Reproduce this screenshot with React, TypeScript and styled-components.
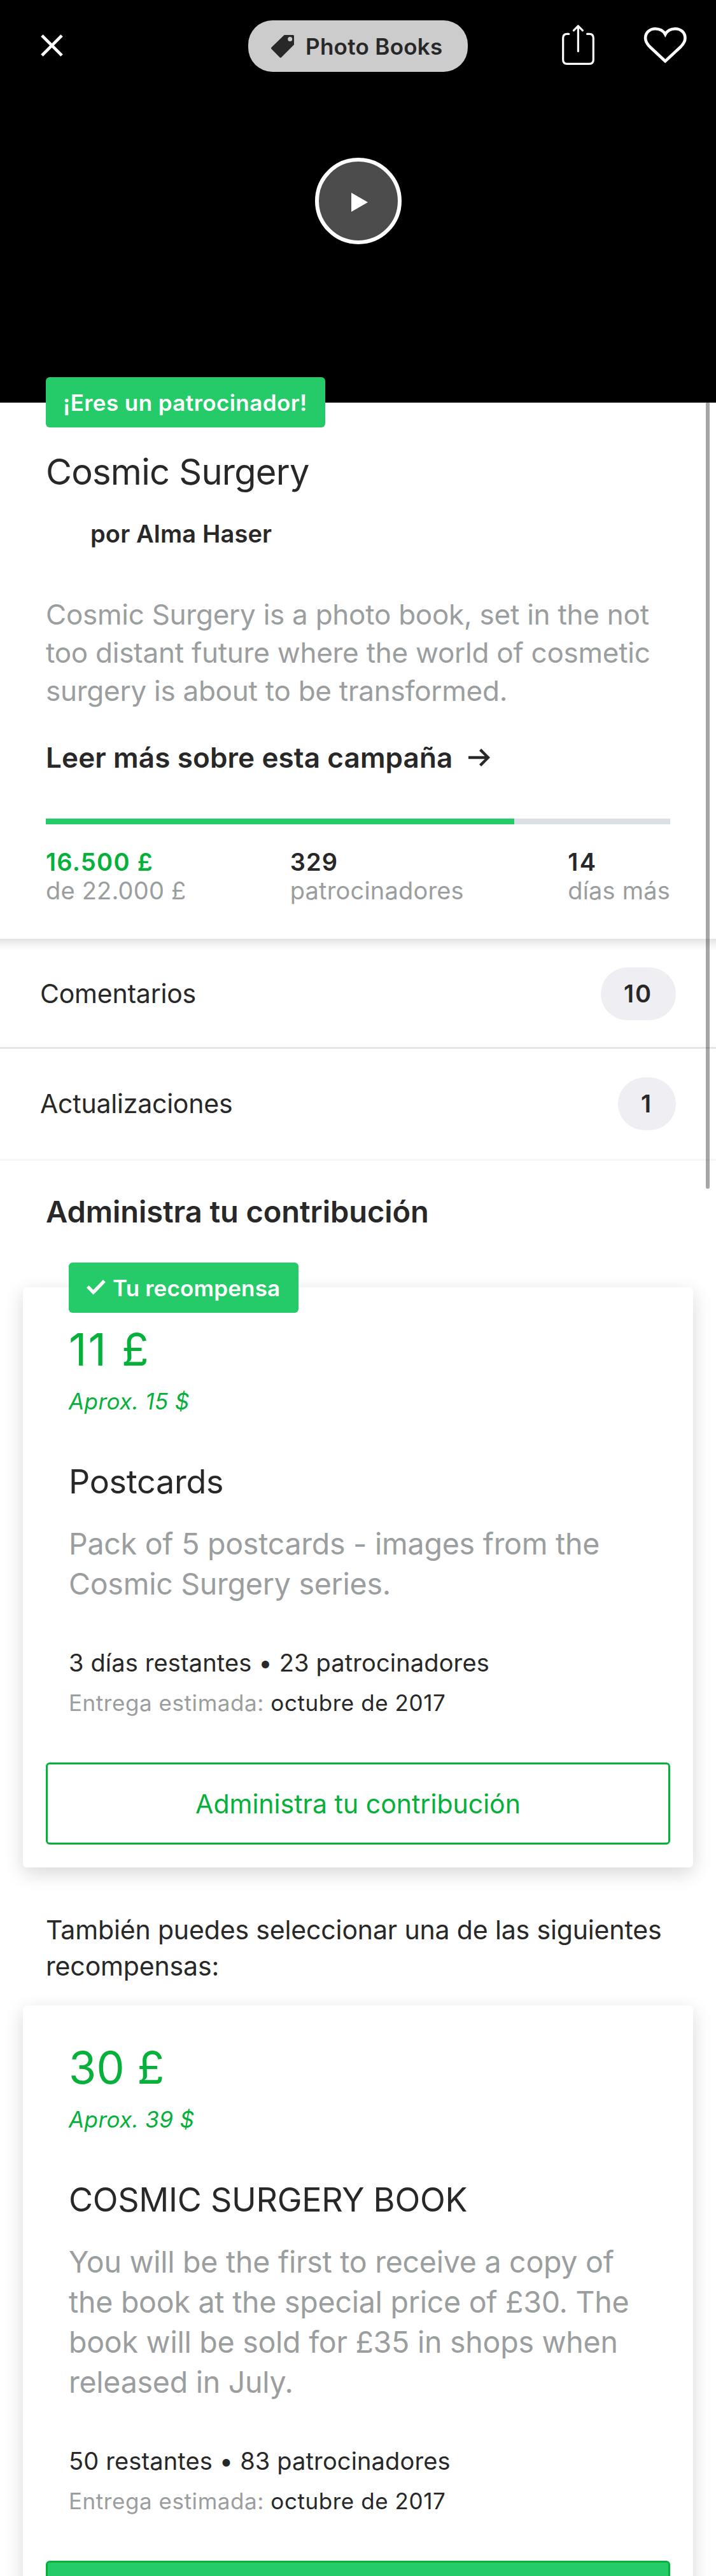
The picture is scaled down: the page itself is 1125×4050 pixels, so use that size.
import React from 'react';
import styled, { createGlobalStyle } from 'styled-components';

const ink = '#282828';
const muted = '#9b9e9e';
const green = '#25cb68';
const deepGreen = '#05b13a';

const GlobalStyle = createGlobalStyle`
  * { box-sizing: border-box; }
  body {
    margin: 0;
    background: #fff;
    color: ${ink};
    font-family: Inter, "Liberation Sans", sans-serif;
    -webkit-font-smoothing: antialiased;
  }
  h1, h2, h3, p { margin: 0; font-weight: 400; }
  button { font-family: inherit; padding: 0; border: 0; background: none; }
  svg { display: block; flex: none; }
`;

const Page = styled.main`
  position: relative;
  width: 1125px;
  height: 4050px;
  overflow: hidden;
  background: #fff;
`;

const ScrollIndicator = styled.div`
  position: absolute;
  top: 600px;
  right: 10px;
  width: 6px;
  height: 1269px;
  border-radius: 3px;
  background: rgba(0, 0, 0, 0.35);
`;

const Hero = styled.header`
  display: flex;
  flex-direction: column;
  align-items: center;
  height: 633px;
  padding: 32px 45px 0;
  background: #000;
`;

const NavBar = styled.nav`
  display: grid;
  grid-template-columns: 1fr 345px 1fr;
  width: 100%;
  height: 81px;
`;

const NavLeft = styled.div`
  padding-left: 19px;
`;

const NavActions = styled.div`
  display: flex;
  justify-content: flex-end;
  gap: 77px;
`;

const CategoryPill = styled.div`
  display: flex;
  align-items: center;
  gap: 18px;
  padding-left: 36px;
  border-radius: 38px;
  background: #cccccc;
  font-size: 35px;
  font-weight: 600;
  letter-spacing: 0.3px;
  white-space: nowrap;
`;

const PlayButton = styled.button`
  display: flex;
  align-items: center;
  justify-content: center;
  width: 136px;
  height: 136px;
  margin-top: 135px;
  border: 6px solid #fff;
  border-radius: 50%;
  background: #4c4c4c;
`;

const PlayGlyph = styled.svg`
  margin: 4px 0 0 4px;
`;

const Badge = styled.div<{ $width: number; $spacing: number }>`
  display: flex;
  align-items: center;
  width: ${(p) => p.$width}px;
  height: 79px;
  padding-left: 27px;
  gap: 11px;
  border-radius: 6px;
  background: ${green};
  color: #fff;
  font-size: 35px;
  font-weight: 600;
  letter-spacing: ${(p) => p.$spacing}px;
  white-space: nowrap;
`;

const Summary = styled.section`
  height: 843px;
  margin-top: -40px;
  padding: 0 72px;
  height: 883px;
`;

const Title = styled.h1`
  margin-top: 34px;
  font-size: 56px;
  line-height: 72px;
  letter-spacing: -0.74px;
`;

const Creator = styled.p`
  margin: 37px 0 0 70px;
  font-size: 38px;
  font-weight: 600;
  line-height: 48px;
  letter-spacing: 0.14px;
`;

const Blurb = styled.p`
  margin-top: 73px;
  color: ${muted};
  font-size: 44px;
  line-height: 60px;
  letter-spacing: -0.26px;
  white-space: nowrap;
`;

const ReadMore = styled.div`
  display: flex;
  align-items: center;
  gap: 25px;
  margin-top: 45px;
  font-size: 44px;
  font-weight: 600;
  line-height: 60px;
  letter-spacing: 0.12px;
`;

const Track = styled.div`
  height: 9px;
  margin-top: 66px;
  background: #dcdee6;
`;

const Fill = styled.div`
  height: 9px;
  background: ${green};
`;

const Stats = styled.div`
  display: flex;
  justify-content: space-between;
  margin-top: 36px;
  font-size: 38px;
  white-space: nowrap;
`;

const StatValue = styled.div<{ $accent?: boolean; $spacing?: number }>`
  color: ${(p) => (p.$accent ? deepGreen : ink)};
  font-weight: 600;
  line-height: 46px;
  letter-spacing: ${(p) => p.$spacing ?? 1.3}px;
`;

const StatLabel = styled.div`
  color: ${muted};
  line-height: 44px;
  letter-spacing: 0.19px;
`;

const LinkList = styled.section`
  background: linear-gradient(#e3e3e3, #f3f3f3 9px, #fff 18px) no-repeat 0 0 / 100% 18px;
`;

const LinkRow = styled.div<{ $first?: boolean }>`
  display: flex;
  align-items: center;
  justify-content: space-between;
  height: ${(p) => (p.$first ? 173 : 176)}px;
  padding: ${(p) => (p.$first ? 3 : 0)}px 63px 0 63px;
  border-bottom: 3px solid ${(p) => (p.$first ? '#e6e6e6' : '#f6f6f6')};
  font-size: 41px;
  line-height: 51px;
  letter-spacing: -0.22px;
`;

const Count = styled.span`
  height: 83px;
  padding: 0 37px 0 36px;
  border-radius: 42px;
  background: #eeeef3;
  font-size: 38px;
  font-weight: 600;
  line-height: 83px;
  letter-spacing: 1.9px;
`;

const SectionTitle = styled.h2`
  margin: 50px 72px 0;
  font-size: 47px;
  font-weight: 600;
  line-height: 60px;
  letter-spacing: -0.05px;
`;

const Note = styled.p`
  margin: 70px 72px 0;
  font-size: 41px;
  line-height: 57px;
  letter-spacing: -0.15px;
  white-space: nowrap;
`;

const Card = styled.article<{ $top: number }>`
  position: relative;
  margin: ${(p) => p.$top}px 36px 0;
  padding: 55px 36px 36px;
  border-radius: 6px;
  background: #fff;
  box-shadow: 0 9px 30px rgba(0, 0, 0, 0.16);
`;

const CardBadge = styled.div`
  position: absolute;
  top: -39px;
  left: 72px;
`;

const CardBody = styled.div`
  padding-left: 36px;
  white-space: nowrap;
`;

const Price = styled.p<{ $spacing: number }>`
  color: ${deepGreen};
  font-size: 70px;
  line-height: 85px;
  letter-spacing: ${(p) => p.$spacing}px;
`;

const Converted = styled.p`
  margin-top: 17px;
  color: ${deepGreen};
  font-size: 35px;
  font-style: italic;
  line-height: 44px;
  letter-spacing: 0.4px;
`;

const RewardTitle = styled.h3`
  margin-top: 73px;
  font-size: 52px;
  line-height: 64px;
  letter-spacing: -0.25px;
`;

const RewardText = styled.p`
  margin-top: 34px;
  color: ${muted};
  font-size: 46.5px;
  line-height: 63px;
  letter-spacing: -0.25px;
`;

const Availability = styled.p`
  margin-top: 69px;
  font-size: 38px;
  line-height: 46px;
  letter-spacing: 0.14px;
`;

const Delivery = styled.p`
  margin-top: 18px;
  color: ${muted};
  font-size: 35px;
  line-height: 44px;
  letter-spacing: 0.56px;
`;

const DeliveryDate = styled.span`
  color: ${ink};
`;

const ActionButton = styled.button<{ $filled?: boolean }>`
  display: block;
  width: 100%;
  height: 129px;
  margin-top: 72px;
  border: 3px solid ${deepGreen};
  border-radius: 6px;
  background: ${(p) => (p.$filled ? green : '#fff')};
  color: ${deepGreen};
  font-size: 41px;
`;

const CloseIcon = () => (
  <svg width="35" height="81" viewBox="0 0 35 81" fill="none" stroke="#fff" strokeWidth="4.8">
    <path d="M1.9 23.9 33.1 55.1M33.1 23.9 1.9 55.1" />
  </svg>
);

const TagIcon = () => (
  <svg width="36" height="36" viewBox="0 0 36 36" fill={ink}>
    <path
      fillRule="evenodd"
      d="M20.6 0H34.5Q36 0 36 1.5V15.2L16 35.3Q14.8 36.4 13.6 35.3L.5 22Q-.5 20.8.5 19.6ZM29.7 2.9a3.5 3.5 0 1 0 0 7 3.5 3.5 0 0 0 0-7Z"
    />
  </svg>
);

const ShareIcon = () => (
  <svg width="51" height="81" viewBox="0 0 51 81" fill="none" stroke="#fff" strokeWidth="3.2" strokeLinecap="round" strokeLinejoin="round">
    <path d="M10.8 21.4H8Q1.7 21.4 1.7 27.7V62Q1.7 68.3 8 68.3H43Q49.3 68.3 49.3 62V27.7Q49.3 21.4 43 21.4H39.6" />
    <path d="M25.4 48.6V9.4M18.4 15.8 25.4 8.8 32.4 15.8" />
  </svg>
);

const HeartIcon = () => (
  <svg width="69" height="81" viewBox="0 0 69 81" fill="none" stroke="#fff" strokeWidth="4.6">
    <path d="M34.3 64.2 10 41.5C5.2 36.6 3.1 32.6 3.1 27.8 3.1 19.2 10 13.2 18.6 13.2 25.6 13.2 31.5 16.6 34.3 22 37.1 16.6 43 13.2 50 13.2 58.6 13.2 65.5 19.2 65.5 27.8 65.5 32.6 63.4 36.6 58.6 41.5Z" />
  </svg>
);

const CheckIcon = () => (
  <svg width="31" height="26" viewBox="-1 0 31 26" fill="#fff">
    <path d="M0 12.6 3.7 9 10.6 16 26 0 29.8 3.7 10.7 23.6Z" />
  </svg>
);

const ArrowIcon = () => (
  <svg width="34" height="28" viewBox="0 0 34 28" fill="none" stroke={ink} strokeWidth="4.4">
    <path d="M0 14H31M18.6 1.6 31 14 18.6 26.4" />
  </svg>
);

interface Reward {
  price: string;
  priceSpacing: number;
  converted: string;
  title: string;
  lines: string[];
  availability: string;
  delivery: string;
}

const rewards: Reward[] = [
  {
    price: '11 £',
    priceSpacing: 2.1,
    converted: 'Aprox. 15 $',
    title: 'Postcards',
    lines: ['Pack of 5 postcards - images from the', 'Cosmic Surgery series.'],
    availability: '3 días restantes • 23 patrocinadores',
    delivery: 'octubre de 2017',
  },
  {
    price: '30 £',
    priceSpacing: 0.14,
    converted: 'Aprox. 39 $',
    title: 'COSMIC SURGERY BOOK',
    lines: [
      'You will be the first to receive a copy of',
      'the book at the special price of £30. The',
      'book will be sold for £35 in shops when',
      'released in July.',
    ],
    availability: '50 restantes • 83 patrocinadores',
    delivery: 'octubre de 2017',
  },
];

const Lines = ({ lines }: { lines: string[] }) => (
  <>
    {lines.map((line) => (
      <React.Fragment key={line}>
        {line}
        <br />
      </React.Fragment>
    ))}
  </>
);

const RewardBody = ({ reward }: { reward: Reward }) => (
  <CardBody>
    <Price $spacing={reward.priceSpacing}>{reward.price}</Price>
    <Converted>{reward.converted}</Converted>
    <RewardTitle>{reward.title}</RewardTitle>
    <RewardText>
      <Lines lines={reward.lines} />
    </RewardText>
    <Availability>{reward.availability}</Availability>
    <Delivery>
      Entrega estimada: <DeliveryDate>{reward.delivery}</DeliveryDate>
    </Delivery>
  </CardBody>
);

export default function App() {
  const funded = 16500 / 22000;
  return (
    <Page>
      <GlobalStyle />
      <Hero>
        <NavBar>
          <NavLeft>
            <CloseIcon />
          </NavLeft>
          <CategoryPill>
            <TagIcon />
            Photo Books
          </CategoryPill>
          <NavActions>
            <ShareIcon />
            <HeartIcon />
          </NavActions>
        </NavBar>
        <PlayButton>
          <PlayGlyph width="26" height="30" viewBox="0 0 26 30" fill="#fff">
            <path d="M0 0 26 15 0 30Z" />
          </PlayGlyph>
        </PlayButton>
      </Hero>

      <Summary>
        <Badge $width={439} $spacing={0.42}>¡Eres un patrocinador!</Badge>
        <Title>Cosmic Surgery</Title>
        <Creator>por Alma Haser</Creator>
        <Blurb>
          <Lines
            lines={[
              'Cosmic Surgery is a photo book, set in the not',
              'too distant future where the world of cosmetic',
              'surgery is about to be transformed.',
            ]}
          />
        </Blurb>
        <ReadMore>
          Leer más sobre esta campaña
          <ArrowIcon />
        </ReadMore>
        <Track>
          <Fill style={{ width: `${funded * 100}%` }} />
        </Track>
        <Stats>
          <div>
            <StatValue $accent>16.500 £</StatValue>
            <StatLabel>de 22.000 £</StatLabel>
          </div>
          <div>
            <StatValue $spacing={1.1}>329</StatValue>
            <StatLabel>patrocinadores</StatLabel>
          </div>
          <div>
            <StatValue $spacing={2.5}>14</StatValue>
            <StatLabel>días más</StatLabel>
          </div>
        </Stats>
      </Summary>

      <LinkList>
        <LinkRow $first>
          Comentarios
          <Count>10</Count>
        </LinkRow>
        <LinkRow>
          Actualizaciones
          <Count>1</Count>
        </LinkRow>
      </LinkList>

      <SectionTitle>Administra tu contribución</SectionTitle>
      <Card $top={89}>
        <CardBadge>
          <Badge $width={361} $spacing={0.17}>
            <CheckIcon />
            Tu recompensa
          </Badge>
        </CardBadge>
        <RewardBody reward={rewards[0]} />
        <ActionButton>Administra tu contribución</ActionButton>
      </Card>

      <Note>
        <Lines lines={['También puedes seleccionar una de las siguientes', 'recompensas:']} />
      </Note>
      <Card $top={33}>
        <RewardBody reward={rewards[1]} />
        <ActionButton $filled />
      </Card>
      <ScrollIndicator />
    </Page>
  );
}
